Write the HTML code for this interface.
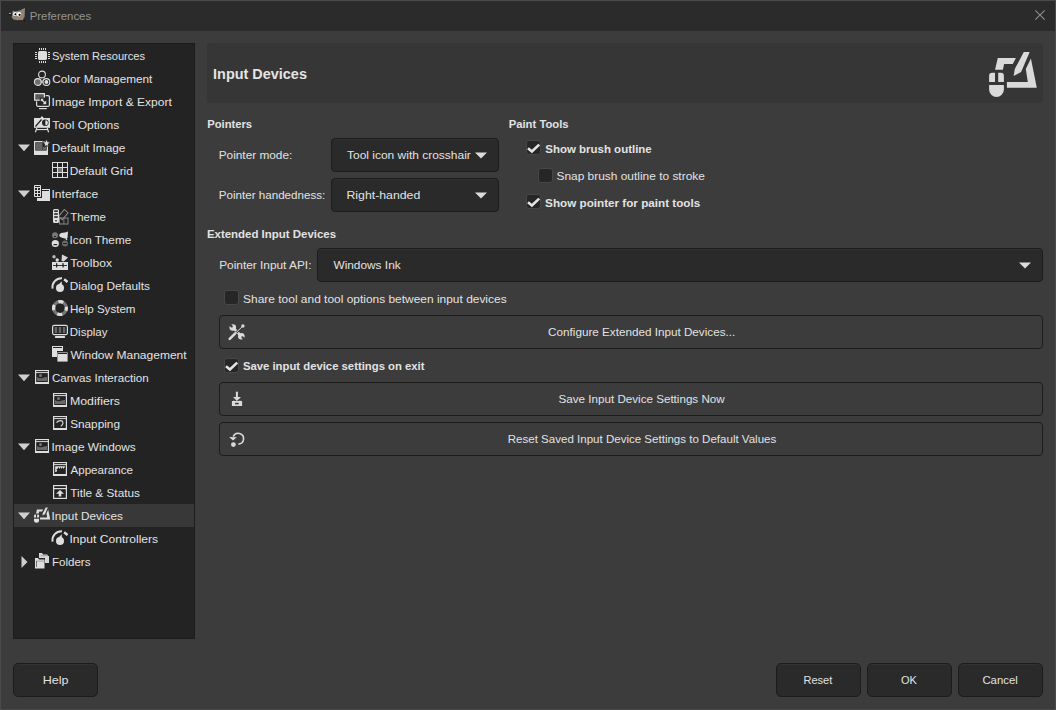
<!DOCTYPE html>
<html><head><meta charset="utf-8">
<style>
html,body{margin:0;padding:0}
body{width:1056px;height:710px;background:#4a4a4a;position:relative;overflow:hidden;font-family:"Liberation Sans",sans-serif;font-size:11.5px;color:#e2e2e2}
.a{position:absolute}
.t{position:absolute;line-height:14px;white-space:nowrap;transform-origin:0 0}
.win{left:1px;top:1px;width:1054px;height:708px;background:#3c3c3c}
.title{left:1px;top:1px;width:1054px;height:30px;background:#2b2b2b}
.tree{left:13px;top:43px;width:180px;height:594px;background:#232323;border:1px solid #1c1c1c}
.sel{left:14px;top:504px;width:180px;height:23px;background:#383838}
.hdr{left:207px;top:43px;width:836px;height:60px;background:#363636;border-radius:3px}
.combo{background:#2a2a2a;border:1px solid #1c1c1c;border-radius:4px;box-sizing:border-box;box-shadow:inset 0 1px #323232}
.btn{background:#3c3c3c;border:1px solid #1c1c1c;border-radius:4px;box-sizing:border-box}
.btn2{background:#2a2a2a;border:1px solid #1c1c1c;border-radius:5px;box-sizing:border-box;box-shadow:inset 0 1px #323232}
.cb{width:15px;height:15px;background:#262626;border:1px solid #474747;border-radius:3px;box-sizing:border-box}
svg{position:absolute;overflow:visible}
</style></head><body>
<div class="a win"></div>
<div class="a title"></div>
<div class="a tree"></div>
<div class="a sel"></div>
<div class="a hdr"></div>
<div class="a combo" style="left:331px;top:138px;width:168px;height:34px"></div>
<div class="a combo" style="left:331px;top:178px;width:168px;height:34px"></div>
<div class="a combo" style="left:317px;top:248px;width:726px;height:34px"></div>
<div class="a btn" style="left:219px;top:315px;width:824px;height:34px"></div>
<div class="a btn" style="left:219px;top:382px;width:824px;height:34px"></div>
<div class="a btn" style="left:219px;top:422px;width:824px;height:34px"></div>
<div class="a btn2" style="left:13px;top:663px;width:85px;height:34px"></div>
<div class="a btn2" style="left:776px;top:663px;width:85px;height:34px"></div>
<div class="a btn2" style="left:867px;top:663px;width:85px;height:34px"></div>
<div class="a btn2" style="left:958px;top:663px;width:85px;height:34px"></div>
<div class="a cb" style="left:526px;top:140px"></div>
<div class="a cb" style="left:538px;top:168px"></div>
<div class="a cb" style="left:526px;top:194px"></div>
<div class="a cb" style="left:224px;top:290px"></div>
<div class="a cb" style="left:224px;top:358px"></div>
<!-- close X -->
<svg style="left:1035px;top:10px" width="10" height="10" viewBox="0 0 10 10"><path d="M0.3 0.3L9.7 9.7M9.7 0.3L0.3 9.7" stroke="#8e8e8e" stroke-width="1.1"/></svg>
<!-- gimp logo -->
<svg style="left:7px;top:6px" width="20" height="18" viewBox="0 0 20 18">
<path d="M4.6 11.2 L5.8 4.4 L8 5.6 L12.5 4.6 L18 2 L17.6 11 L15.6 13.8 L10.5 14.2 L6.5 13.4Z" fill="#8e8578"/>
<circle cx="8" cy="7.9" r="2" fill="#fff"/><circle cx="12" cy="8.2" r="2.2" fill="#fff"/>
<circle cx="8.4" cy="8.3" r="1" fill="#000"/><circle cx="12.6" cy="8.8" r="1.1" fill="#000"/>
<circle cx="3.2" cy="8.2" r="1.4" fill="#111"/><circle cx="3" cy="7.5" r="0.7" fill="#fff"/>
<path d="M12.8 11.8 L16 13.2 L15.4 14.4 Z" fill="#e0801a"/><circle cx="17.4" cy="14.8" r="0.8" fill="#111"/>
</svg>
<!-- header icon -->
<svg style="left:984px;top:46px" width="56" height="56" viewBox="0 0 56 56" fill="#dadada">
<path d="M13.8 12 L31.9 12 L28.8 18.1 L20.1 18.1 L18.9 23.7 L11 23.7 Z"/>
<path d="M46.9 12.6 L52.8 41.8 L22.9 41.8 L22.9 35.9 L43.8 35.9 L41.8 22.9 Z"/>
<path d="M39.8 5.9 L45.7 5.9 L37.1 26 L29.6 30 L30.8 22.9 Z"/>
<path d="M5.1 35.9 L5.1 30 Q5.1 26.8 8 26.8 L11 26.8 L11 35.9 Z"/>
<path d="M14.2 35.9 L14.2 26.8 L17 26.8 Q19.9 26.8 19.9 30 L19.9 35.9 Z"/>
<path d="M5.1 39 L19.9 39 L19.9 43.5 A7.4 7.4 0 0 1 5.1 43.5 Z"/>
</svg>
<!-- combo triangles -->
<svg style="left:475px;top:152px" width="12" height="7" viewBox="0 0 12 7"><path d="M0 0.5H12L6 6.5Z" fill="#dcdcdc"/></svg>
<svg style="left:475px;top:192px" width="12" height="7" viewBox="0 0 12 7"><path d="M0 0.5H12L6 6.5Z" fill="#dcdcdc"/></svg>
<svg style="left:1019px;top:262px" width="12" height="7" viewBox="0 0 12 7"><path d="M0 0.5H12L6 6.5Z" fill="#dcdcdc"/></svg>
<!-- tree expanders -->
<svg style="left:18px;top:144px" width="12" height="8" viewBox="0 0 12 8"><path d="M0 0.6H12L6 7.2Z" fill="#cfcfcf"/></svg>
<svg style="left:18px;top:190px" width="12" height="8" viewBox="0 0 12 8"><path d="M0 0.6H12L6 7.2Z" fill="#cfcfcf"/></svg>
<svg style="left:18px;top:374px" width="12" height="8" viewBox="0 0 12 8"><path d="M0 0.6H12L6 7.2Z" fill="#cfcfcf"/></svg>
<svg style="left:18px;top:443px" width="12" height="8" viewBox="0 0 12 8"><path d="M0 0.6H12L6 7.2Z" fill="#cfcfcf"/></svg>
<svg style="left:18px;top:512px" width="12" height="8" viewBox="0 0 12 8"><path d="M0 0.6H12L6 7.2Z" fill="#cfcfcf"/></svg>
<svg style="left:21px;top:556px" width="7" height="12" viewBox="0 0 7 12"><path d="M0.5 0L6.5 6L0.5 12Z" fill="#cfcfcf"/></svg>
<!-- checkmarks -->
<svg style="left:526px;top:140px" width="15" height="15" viewBox="0 0 15 15"><path d="M2 8.2L5.9 11.4L13.2 4.6" stroke="#e4e4e4" stroke-width="2.6" fill="none"/></svg>
<svg style="left:526px;top:194px" width="15" height="15" viewBox="0 0 15 15"><path d="M2 8.2L5.9 11.4L13.2 4.6" stroke="#e4e4e4" stroke-width="2.6" fill="none"/></svg>
<svg style="left:224px;top:358px" width="15" height="15" viewBox="0 0 15 15"><path d="M2 8.2L5.9 11.4L13.2 4.6" stroke="#e4e4e4" stroke-width="2.6" fill="none"/></svg>
<svg style="left:32px;top:46px" width="20" height="20" viewBox="0 0 20 20"><rect x="6" y="5" width="9" height="9" rx="1.6" fill="#dedede"/><rect x="7" y="2" width="1" height="2" fill="#dedede"/><rect x="7" y="15" width="1" height="2" fill="#dedede"/><rect x="9" y="2" width="1" height="2" fill="#dedede"/><rect x="9" y="15" width="1" height="2" fill="#dedede"/><rect x="11" y="2" width="1" height="2" fill="#dedede"/><rect x="11" y="15" width="1" height="2" fill="#dedede"/><rect x="13" y="2" width="1" height="2" fill="#dedede"/><rect x="13" y="15" width="1" height="2" fill="#dedede"/><rect x="3" y="6" width="2" height="1" fill="#dedede"/><rect x="16" y="6" width="2" height="1" fill="#dedede"/><rect x="3" y="8" width="2" height="1" fill="#dedede"/><rect x="16" y="8" width="2" height="1" fill="#dedede"/><rect x="3" y="10" width="2" height="1" fill="#dedede"/><rect x="16" y="10" width="2" height="1" fill="#dedede"/><rect x="3" y="12" width="2" height="1" fill="#dedede"/><rect x="16" y="12" width="2" height="1" fill="#dedede"/></svg>
<svg style="left:32px;top:69px" width="20" height="20" viewBox="0 0 20 20"><circle cx="10" cy="5.5" r="3.4" fill="none" stroke="#dedede" stroke-width="1.1"/><circle cx="5.8" cy="13" r="3.4" fill="#6e6e6e" stroke="#dedede" stroke-width="1.1"/><circle cx="14.4" cy="13" r="3.4" fill="#232323" stroke="#dedede" stroke-width="1.1"/><circle cx="14.4" cy="13" r="1.9" fill="#dedede"/><rect x="9.4" y="11.5" width="1.2" height="2.5" fill="#dedede"/></svg>
<svg style="left:32px;top:92px" width="20" height="20" viewBox="0 0 20 20"><rect x="4.6" y="3.6" width="12.8" height="10.8" rx="1.5" fill="none" stroke="#dedede" stroke-width="1.2"/><rect x="7" y="16" width="7.8" height="1.2" fill="#dedede"/><rect x="1.5" y="0.5" width="12.1" height="8.8" fill="#232323"/><rect x="2.6" y="1.6" width="9.8" height="6.6" fill="#5c5c5c" stroke="#dedede" stroke-width="1.2"/><path d="M7.8 5.6 H15 V13.2 H7.8Z" fill="#232323"/><path d="M9.6 7.6 L13 11" stroke="#dedede" stroke-width="1.4"/><path d="M14.2 12.2 L14.2 8.6 L10.6 12.2Z" fill="#dedede"/><path d="M8.8 6.8 L11.8 6.8 L8.8 9.8Z" fill="#dedede"/></svg>
<svg style="left:32px;top:115px" width="20" height="20" viewBox="0 0 20 20"><rect x="2" y="3" width="16" height="9.8" fill="#dedede"/><path d="M10 1 L8.3 3 H11.7Z" fill="#dedede"/><path d="M3.5 11.5 L9.5 4.5" stroke="#232323" stroke-width="1.2"/><circle cx="13.3" cy="7.8" r="3.3" fill="#232323"/><path d="M13.4 5.3 A2.5 2.5 0 0 1 13.4 10.3Z" fill="#dedede"/><rect x="4.5" y="14" width="11" height="1.1" fill="#dedede"/><path d="M4.8 13 L3.4 17.2 M15.2 13 L16.6 17.2" stroke="#dedede" stroke-width="1.2"/></svg>
<svg style="left:32px;top:138px" width="20" height="20" viewBox="0 0 20 20"><rect x="2" y="3" width="14" height="14" fill="#dedede"/><rect x="3.3" y="4.3" width="11.4" height="8.3" fill="#232323"/><rect x="4" y="5" width="6.5" height="7" fill="#666"/><rect x="11" y="9" width="3" height="3" fill="#666"/><path d="M14.5 0.8 L15.6 3.8 L18.5 4 L16.3 6 L17 9 L14.5 7.5 L12 9 L12.7 6 L10.5 4 L13.4 3.8Z" fill="#dedede" stroke="#232323" stroke-width="0.9"/></svg>
<svg style="left:50px;top:161px" width="20" height="20" viewBox="0 0 20 20"><rect x="2" y="1" width="16" height="16" fill="#dedede"/><rect x="3" y="2" width="4" height="4" fill="#232323"/><rect x="3" y="7" width="4" height="4" fill="#232323"/><rect x="3" y="12" width="4" height="4" fill="#232323"/><rect x="8" y="2" width="4" height="4" fill="#232323"/><rect x="8" y="7" width="4" height="4" fill="#7a7a7a"/><rect x="8" y="12" width="4" height="4" fill="#232323"/><rect x="13" y="2" width="4" height="4" fill="#232323"/><rect x="13" y="7" width="4" height="4" fill="#232323"/><rect x="13" y="12" width="4" height="4" fill="#232323"/></svg>
<svg style="left:32px;top:184px" width="20" height="20" viewBox="0 0 20 20"><rect x="5" y="5" width="13" height="12" fill="#dedede"/><rect x="10" y="6" width="7" height="1" fill="#232323"/><rect x="1" y="0" width="9" height="14" fill="#232323"/><rect x="2" y="1" width="7" height="12" rx="0.8" fill="#dedede"/><rect x="3" y="2" width="5" height="1" fill="#232323"/><rect x="3" y="4" width="2" height="2" fill="#232323"/><rect x="3" y="7" width="2" height="2" fill="#232323"/><rect x="3" y="10" width="2" height="2" fill="#232323"/><rect x="6" y="4" width="2" height="2" fill="#232323"/><rect x="6" y="7" width="2" height="2" fill="#232323"/><rect x="6" y="10" width="2" height="2" fill="#232323"/></svg>
<svg style="left:50px;top:207px" width="20" height="20" viewBox="0 0 20 20"><g transform="rotate(40 13 8)"><rect x="10.5" y="3" width="5" height="9" fill="none" stroke="#8a8a8a" stroke-width="1"/></g><rect x="9.5" y="11" width="8.5" height="6" fill="none" stroke="#8a8a8a" stroke-width="1"/><rect x="13.5" y="11" width="0.8" height="6" fill="#8a8a8a"/><rect x="3" y="2" width="6" height="14" rx="1.5" fill="#dedede"/><rect x="4.2" y="3.3" width="3.6" height="1.6" fill="#232323"/><rect x="4.2" y="6.2" width="3.6" height="1.6" fill="#232323"/><rect x="4.2" y="9.2" width="3.6" height="1.6" fill="#232323"/><rect x="5.3" y="13" width="1.4" height="1.4" fill="#232323"/></svg>
<svg style="left:50px;top:230px" width="20" height="20" viewBox="0 0 20 20"><circle cx="5" cy="5.2" r="3" fill="#777"/><rect x="4" y="6" width="2" height="1" fill="#232323"/><path d="M9 5 L11 3 L15 2.5 L18 1.5 L17.5 8 L16.5 9 L13 8 L10 7Z" fill="#dedede"/><circle cx="16.5" cy="9.5" r="0.8" fill="#dedede"/><circle cx="5.3" cy="13.5" r="3.6" fill="#dedede"/><rect x="3.5" y="14" width="3.6" height="1.2" fill="#232323"/><circle cx="15" cy="13.5" r="3" fill="#6a6a6a"/><rect x="13" y="13" width="4" height="1" fill="#232323"/></svg>
<svg style="left:50px;top:253px" width="20" height="20" viewBox="0 0 20 20"><rect x="2" y="9" width="16" height="8" fill="#dedede"/><rect x="3" y="12" width="14" height="0.9" fill="#232323"/><rect x="6" y="10.2" width="1.3" height="4.2" fill="#232323"/><rect x="12.4" y="10.2" width="1.3" height="4.2" fill="#232323"/><path d="M12 1.5 L18 4.5 L13.8 8.5 L11.5 8Z" fill="#d8d8d8"/><circle cx="4" cy="3.8" r="1.7" fill="#bbb"/><circle cx="7.2" cy="7" r="1.7" fill="#ddd"/></svg>
<svg style="left:50px;top:276px" width="20" height="20" viewBox="0 0 20 20"><path d="M2.5 12.6 A9.1 9.1 0 0 1 12 2.2" fill="none" stroke="#dedede" stroke-width="1.9"/><rect x="13.7" y="3.4" width="4.3" height="2.5" transform="rotate(38 15.85 4.65)" fill="#dedede"/><circle cx="10" cy="12" r="4" fill="#dedede"/><path d="M8.3 8.8 L11.8 5.3 L11.8 9.2Z" fill="#dedede"/></svg>
<svg style="left:50px;top:299px" width="20" height="20" viewBox="0 0 20 20"><circle cx="10" cy="9.1" r="6.4" fill="none" stroke="#777" stroke-width="3.2"/><circle cx="10" cy="9.1" r="6.4" fill="none" stroke="#dedede" stroke-width="3.2" stroke-dasharray="5.05 5" stroke-dashoffset="-7.6"/></svg>
<svg style="left:50px;top:322px" width="20" height="20" viewBox="0 0 20 20"><rect x="2.6" y="3.4" width="14.8" height="9.2" rx="1.5" fill="none" stroke="#dedede" stroke-width="1.2"/><rect x="4.6" y="5" width="2.5" height="6" fill="#666"/><rect x="8.7" y="5" width="2.5" height="6" fill="#666"/><rect x="12.8" y="5" width="2.5" height="6" fill="#666"/><rect x="5" y="14" width="10" height="2" rx="0.5" fill="#dedede"/></svg>
<svg style="left:50px;top:345px" width="20" height="20" viewBox="0 0 20 20"><rect x="7" y="7" width="11" height="10" fill="#dedede" stroke="#232323" stroke-width="0.8"/><rect x="8" y="8" width="9" height="1" fill="#232323"/><path d="M2 1 H13 V6 H7 V12 H2Z" fill="#dedede"/><rect x="3" y="2" width="9" height="1" fill="#232323"/></svg>
<svg style="left:32px;top:368px" width="20" height="20" viewBox="0 0 20 20"><rect x="3" y="2" width="14" height="14" fill="#dedede"/><rect x="4.2" y="3.1" width="11.6" height="1" fill="#232323"/><rect x="4.2" y="5.1" width="11.6" height="8.9" fill="#232323"/><circle cx="8.5" cy="7.5" r="1.5" fill="#777"/><path d="M5 9 Q8 11 10.5 10 Q13 9 15 9 V13 H5Z" fill="#6a6a6a"/></svg>
<svg style="left:50px;top:391px" width="20" height="20" viewBox="0 0 20 20"><rect x="3" y="2" width="14" height="14" fill="#dedede"/><rect x="4.2" y="3.1" width="11.6" height="1" fill="#232323"/><rect x="4.2" y="5.1" width="11.6" height="8.9" fill="#232323"/><circle cx="8.5" cy="7.5" r="1.5" fill="#777"/><path d="M5 9 Q8 11 10.5 10 Q13 9 15 9 V13 H5Z" fill="#6a6a6a"/></svg>
<svg style="left:50px;top:414px" width="20" height="20" viewBox="0 0 20 20"><rect x="3" y="2" width="14" height="14" fill="#dedede"/><rect x="4.2" y="3.1" width="11.6" height="1" fill="#232323"/><rect x="4.2" y="5.1" width="11.6" height="8.9" fill="#232323"/><path d="M6.5 8.5 Q9.5 5.5 12.5 7.2 Q14 9.5 10.8 12.3" fill="none" stroke="#dedede" stroke-width="1.1"/></svg>
<svg style="left:32px;top:437px" width="20" height="20" viewBox="0 0 20 20"><rect x="3" y="2" width="14" height="14" fill="#dedede"/><rect x="4.2" y="3.1" width="11.6" height="1" fill="#232323"/><rect x="4.2" y="5.1" width="11.6" height="8.9" fill="#232323"/><circle cx="8.5" cy="7.5" r="1.5" fill="#777"/><path d="M5 9 Q8 11 10.5 10 Q13 9 15 9 V13 H5Z" fill="#6a6a6a"/></svg>
<svg style="left:50px;top:460px" width="20" height="20" viewBox="0 0 20 20"><rect x="3" y="2" width="14" height="14" fill="#dedede"/><rect x="4.2" y="3.1" width="11.6" height="1" fill="#232323"/><rect x="4.2" y="5.1" width="11.6" height="8.9" fill="#232323"/><path d="M5.2 6.2 H15 V7.5 H14 V8.5 H13 V7.5 H12 V8.5 H11 V7.5 H10 V8.5 H9 V7.5 H8 V8.5 H7 V9 H6.6 V10 H7 V11 H6.6 V12 H5.2Z" fill="#dedede"/></svg>
<svg style="left:50px;top:483px" width="20" height="20" viewBox="0 0 20 20"><rect x="3" y="2" width="14" height="14" fill="#dedede"/><rect x="4.2" y="3.2" width="11.6" height="1.8" fill="#232323"/><rect x="4.2" y="6.2" width="11.6" height="8.6" fill="#232323"/><path d="M6 10.7 L10 7 L14 10.7 H11.3 V13.6 H8.7 V10.7Z" fill="#dedede"/></svg>
<svg style="left:32px;top:506px" width="20" height="20" viewBox="0 0 20 20"><g transform="translate(0.27 -0.61) scale(0.34)" fill="#e0e0e0"><path d="M13.8 12 L31.9 12 L28.8 18.1 L20.1 18.1 L18.9 23.7 L11 23.7 Z"/><path d="M46.9 12.6 L52.8 41.8 L22.9 41.8 L22.9 35.9 L43.8 35.9 L41.8 22.9 Z"/><path d="M39.8 5.9 L45.7 5.9 L37.1 26 L29.6 30 L30.8 22.9 Z"/><path d="M5.1 35.9 L5.1 30 Q5.1 26.8 8 26.8 L11 26.8 L11 35.9 Z"/><path d="M14.2 35.9 L14.2 26.8 L17 26.8 Q19.9 26.8 19.9 30 L19.9 35.9 Z"/><path d="M5.1 39 L19.9 39 L19.9 43.5 A7.4 7.4 0 0 1 5.1 43.5 Z"/></g></svg>
<svg style="left:50px;top:529px" width="20" height="20" viewBox="0 0 20 20"><path d="M2.5 12.6 A9.1 9.1 0 0 1 12 2.2" fill="none" stroke="#dedede" stroke-width="1.9"/><rect x="13.7" y="3.4" width="4.3" height="2.5" transform="rotate(38 15.85 4.65)" fill="#dedede"/><circle cx="10" cy="12" r="4" fill="#dedede"/><path d="M8.3 8.8 L11.8 5.3 L11.8 9.2Z" fill="#dedede"/></svg>
<svg style="left:32px;top:552px" width="20" height="20" viewBox="0 0 20 20"><path d="M7 1 H10 L11 2.5 H15.5 V4 H17 V11 H13 V6 H7Z" fill="#d8d8d8"/><rect x="8.6" y="3" width="7" height="1.2" fill="#aaa"/><path d="M3 6 H6 L7 7.5 H12.5 V16.5 H3Z" fill="#dedede"/><rect x="4" y="8.5" width="8.5" height="1.2" fill="#aaa"/><rect x="4" y="9" width="0.9" height="6" fill="#666"/></svg><svg style="left:226px;top:321px" width="22" height="22" viewBox="0 0 22 22">
<path d="M6.8 6.5 L15.3 15.2" stroke="#dadada" stroke-width="2.6"/>
<circle cx="6.8" cy="6.5" r="3.3" fill="#dadada"/>
<circle cx="15.3" cy="15.2" r="3.3" fill="#dadada"/>
<path d="M5.7 5.4 L2.3 2" stroke="#3c3c3c" stroke-width="2.2" stroke-linecap="round"/>
<path d="M16.4 16.3 L19.8 19.7" stroke="#3c3c3c" stroke-width="2.2" stroke-linecap="round"/>
<path d="M3.4 18.2 L17.2 4.8" stroke="#3c3c3c" stroke-width="2.4"/>
<path d="M9.3 12.4 L16.9 5" stroke="#dadada" stroke-width="1"/>
<path d="M3.7 17.9 L9.3 12.4" stroke="#dadada" stroke-width="2.6" stroke-linecap="round"/>
<circle cx="16.9" cy="5" r="1.7" fill="#dadada"/>
</svg>
<svg style="left:226px;top:388px" width="22" height="22" viewBox="0 0 22 22" fill="#dadada">
<rect x="9.9" y="3.7" width="2" height="5.8"/>
<path d="M7 9.1 H15 L10.9 12.9Z"/>
<path d="M5.9 13 H7.4 L7.9 12.2 L8.6 13 H13.3 L14 12.2 L14.5 13 H16.1 V18 H5.9Z"/>
<rect x="9.1" y="14.8" width="3.6" height="1.6" fill="#3c3c3c"/>
</svg>
<svg style="left:226px;top:428px" width="22" height="22" viewBox="0 0 22 22">
<path d="M12.4 16.1 A5.4 5.4 0 1 0 7.2 8.6" fill="none" stroke="#dadada" stroke-width="1.6"/>
<path d="M3.1 9.1 L10.9 9.2 L7 12.5Z" fill="#dadada"/>
<circle cx="7.4" cy="16.6" r="2.4" fill="#dadada"/>
</svg>

<div class="t" style="left:29px;top:9px;transform:translateX(0.71px) scaleX(0.9905);color:#939393">Preferences</div>
<div class="t" style="left:51px;top:49px;transform:translateX(0.88px) scaleX(0.9651)">System Resources</div>
<div class="t" style="left:52px;top:72px;transform:translateX(0.23px) scaleX(1.0241)">Color Management</div>
<div class="t" style="left:51px;top:95px;transform:translateX(0.57px) scaleX(1.0444)">Image Import &amp; Export</div>
<div class="t" style="left:52px;top:118px;transform:translateX(0.26px) scaleX(1.0466)">Tool Options</div>
<div class="t" style="left:51px;top:141px;transform:translateX(0.75px) scaleX(1.0295)">Default Image</div>
<div class="t" style="left:69px;top:164px;transform:translateX(0.64px) scaleX(1.0294)">Default Grid</div>
<div class="t" style="left:51px;top:187px;transform:translateX(0.51px) scaleX(1.0455)">Interface</div>
<div class="t" style="left:70px;top:210px;transform:translateX(0.26px) scaleX(0.9929)">Theme</div>
<div class="t" style="left:69px;top:233px;transform:translateX(0.53px) scaleX(1.0182)">Icon Theme</div>
<div class="t" style="left:70px;top:256px;transform:translateX(0.25px) scaleX(1.0517)">Toolbox</div>
<div class="t" style="left:69px;top:279px;transform:translateX(0.75px) scaleX(1.0272)">Dialog Defaults</div>
<div class="t" style="left:69px;top:302px;transform:translateX(0.89px) scaleX(1.0063)">Help System</div>
<div class="t" style="left:69px;top:325px;transform:translateX(0.77px) scaleX(1.0005)">Display</div>
<div class="t" style="left:70px;top:348px;transform:translateX(0.50px) scaleX(1.0435)">Window Management</div>
<div class="t" style="left:51px;top:371px;transform:translateX(0.90px) scaleX(1.0089)">Canvas Interaction</div>
<div class="t" style="left:69px;top:394px;transform:translateX(0.98px) scaleX(1.0730)">Modifiers</div>
<div class="t" style="left:70px;top:417px;transform:translateX(0.13px) scaleX(1.0249)">Snapping</div>
<div class="t" style="left:51px;top:440px;transform:translateX(0.58px) scaleX(1.0290)">Image Windows</div>
<div class="t" style="left:70px;top:463px;transform:translateX(0.48px) scaleX(1.0065)">Appearance</div>
<div class="t" style="left:70px;top:486px;transform:translateX(0.27px) scaleX(1.0246)">Title &amp; Status</div>
<div class="t" style="left:51px;top:509px;transform:translateX(0.48px) scaleX(1.0240)">Input Devices</div>
<div class="t" style="left:69px;top:532px;transform:translateX(0.49px) scaleX(1.0509)">Input Controllers</div>
<div class="t" style="left:51px;top:555px;transform:translateX(0.89px) scaleX(1.0070)">Folders</div>
<div class="t" style="left:213px;top:67px;transform:translateX(0.10px) scaleX(1.0307);font-weight:bold;font-size:14px;color:#e4e4e4">Input Devices</div>
<div class="t" style="left:207px;top:117px;transform:translateX(0.18px) scaleX(0.9763);font-weight:bold">Pointers</div>
<div class="t" style="left:508px;top:117px;transform:translateX(0.68px) scaleX(0.9806);font-weight:bold">Paint Tools</div>
<div class="t" style="left:218px;top:148px;transform:translateX(0.67px) scaleX(1.0286)">Pointer mode:</div>
<div class="t" style="left:218px;top:188px;transform:translateX(0.76px) scaleX(1.0099)">Pointer handedness:</div>
<div class="t" style="left:347px;top:148px;transform:translateX(0.01px) scaleX(1.0414)">Tool icon with crosshair</div>
<div class="t" style="left:346px;top:188px;transform:translateX(0.48px) scaleX(1.0685)">Right-handed</div>
<div class="t" style="left:545px;top:142px;transform:translateX(0.26px) scaleX(0.9979);font-weight:bold">Show brush outline</div>
<div class="t" style="left:556px;top:169px;transform:translateX(0.46px) scaleX(1.0362)">Snap brush outline to stroke</div>
<div class="t" style="left:545px;top:196px;transform:translateX(0.10px) scaleX(1.0159);font-weight:bold">Show pointer for paint tools</div>
<div class="t" style="left:206px;top:227px;transform:translateX(0.89px) scaleX(0.9959);font-weight:bold">Extended Input Devices</div>
<div class="t" style="left:219px;top:258px;transform:translateX(0.14px) scaleX(1.0315)">Pointer Input API:</div>
<div class="t" style="left:333px;top:258px;transform:translateX(0.44px) scaleX(1.0313)">Windows Ink</div>
<div class="t" style="left:243px;top:292px;transform:translateX(0.12px) scaleX(1.0381)">Share tool and tool options between input devices</div>
<div class="t" style="left:548px;top:325px;transform:translateX(0.10px) scaleX(1.0165)">Configure Extended Input Devices...</div>
<div class="t" style="left:242px;top:359px;transform:translateX(0.93px) scaleX(0.9831);font-weight:bold">Save input device settings on exit</div>
<div class="t" style="left:558px;top:392px;transform:translateX(0.54px) scaleX(1.0113)">Save Input Device Settings Now</div>
<div class="t" style="left:507px;top:432px;transform:translateX(0.76px) scaleX(1.0033)">Reset Saved Input Device Settings to Default Values</div>
<div class="t" style="left:42px;top:673px;transform:translateX(0.82px) scaleX(1.0891)">Help</div>
<div class="t" style="left:803px;top:673px;transform:translateX(0.44px) scaleX(0.9595)">Reset</div>
<div class="t" style="left:901px;top:673px;transform:translateX(0.00px) scaleX(0.9580)">OK</div>
<div class="t" style="left:982px;top:673px;transform:translateX(0.40px) scaleX(0.9885)">Cancel</div>
</body></html>
